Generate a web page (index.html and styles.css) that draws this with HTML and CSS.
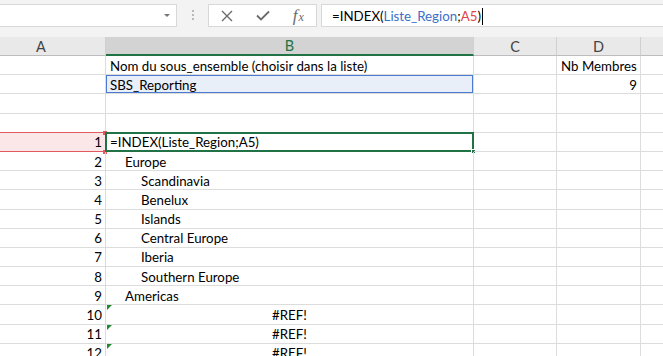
FILE: index.html
```html
<!DOCTYPE html>
<html>
<head>
<meta charset="utf-8">
<link rel="stylesheet" href="styles.css">
</head>
<body>
<div class="toolbar">
  <div class="namebox"><span class="dd"></span></div>
  <div class="grip"><i></i><i></i><i></i></div>
  <div class="fxbtns">
    <span class="slot"><svg width="12" height="12" viewBox="0 0 12 12"><path d="M1 1L11 11M11 1L1 11" stroke="#6b6b6b" stroke-width="1.4" fill="none"/></svg></span>
    <span class="slot"><svg width="14" height="11" viewBox="0 0 14 11"><path d="M1 5.5L5 9.5L13 1.5" stroke="#6b6b6b" stroke-width="1.8" fill="none"/></svg></span>
    <span class="slot fx"><span class="f">f</span><span class="x">x</span></span>
  </div>
  <div class="formula">=INDEX(<span class="rb">Liste_Region</span>;<span class="rr">A5</span>)<span class="caret"></span></div>
</div>
<div class="sheet">
  <div class="hd">A</div><div class="hd sel">B</div><div class="hd">C</div><div class="hd">D</div><div class="hd"></div>

  <div class="c"></div><div class="c">Nom du sous_ensemble (choisir dans la liste)</div><div class="c"></div><div class="c">Nb Membres</div><div class="c"></div>
  <div class="c"></div><div class="c boxed">SBS_Reporting</div><div class="c"></div><div class="c r">9</div><div class="c"></div>
  <div class="c"></div><div class="c"></div><div class="c"></div><div class="c"></div><div class="c"></div>
  <div class="c"></div><div class="c"></div><div class="c"></div><div class="c"></div><div class="c"></div>
  <div class="c r refcell">1</div><div class="c active">=INDEX(Liste_Region;A5)</div><div class="c"></div><div class="c"></div><div class="c"></div>
  <div class="c r">2</div><div class="c i1">Europe</div><div class="c"></div><div class="c"></div><div class="c"></div>
  <div class="c r">3</div><div class="c i2">Scandinavia</div><div class="c"></div><div class="c"></div><div class="c"></div>
  <div class="c r">4</div><div class="c i2">Benelux</div><div class="c"></div><div class="c"></div><div class="c"></div>
  <div class="c r">5</div><div class="c i2">Islands</div><div class="c"></div><div class="c"></div><div class="c"></div>
  <div class="c r">6</div><div class="c i2">Central Europe</div><div class="c"></div><div class="c"></div><div class="c"></div>
  <div class="c r">7</div><div class="c i2">Iberia</div><div class="c"></div><div class="c"></div><div class="c"></div>
  <div class="c r">8</div><div class="c i2">Southern Europe</div><div class="c"></div><div class="c"></div><div class="c"></div>
  <div class="c r">9</div><div class="c i1">Americas</div><div class="c"></div><div class="c"></div><div class="c"></div>
  <div class="c r">10</div><div class="c ctr err">#REF!</div><div class="c"></div><div class="c"></div><div class="c"></div>
  <div class="c r">11</div><div class="c ctr err">#REF!</div><div class="c"></div><div class="c"></div><div class="c"></div>
  <div class="c r">12</div><div class="c ctr err">#REF!</div><div class="c"></div><div class="c"></div><div class="c"></div>
</div>
</body>
</html>
```

FILE: styles.css
```css
html, body {
  margin: 0;
  padding: 0;
}
body {
  width: 663px;
  height: 356px;
  overflow: hidden;
  background: #fff;
  font-family: Lato, "Liberation Sans", sans-serif;
  font-size: 13.3px;
  color: #000;
}

.toolbar {
  height: 37px;
  box-sizing: border-box;
  padding-top: 4px;
  background: #f3f3f3;
  display: flex;
  align-items: flex-start;
}
.namebox {
  width: 177px;
  height: 23px;
  box-sizing: border-box;
  background: #fff;
  border: 1px solid #d8d8d8;
  border-left: none;
  display: flex;
  align-items: center;
  justify-content: flex-end;
  padding-right: 6px;
}
.dd {
  width: 0;
  height: 0;
  border-left: 3px solid transparent;
  border-right: 3px solid transparent;
  border-top: 3px solid #767676;
}
.grip {
  width: 31px;
  display: flex;
  flex-direction: column;
  align-items: center;
  gap: 2px;
  padding-top: 6px;
}
.grip i {
  display: block;
  width: 2px;
  height: 2px;
  background: #b9b9b9;
}
.fxbtns {
  width: 109px;
  height: 23px;
  box-sizing: border-box;
  background: #fff;
  border: 1px solid #d8d8d8;
  display: flex;
  align-items: center;
}
.slot {
  width: 36px;
  display: flex;
  justify-content: center;
  align-items: center;
}
.fx {
  font-family: "Liberation Serif", serif;
  font-style: italic;
  color: #6b6b6b;
  align-items: baseline;
}
.fx .f { font-size: 17px; }
.fx .x { font-size: 12px; margin-left: 1px; }
.formula {
  flex: 1;
  height: 23px;
  box-sizing: border-box;
  margin-left: 4px;
  background: #fff;
  border: 1px solid #d8d8d8;
  border-right: none;
  padding-left: 10px;
  padding-top: 1px;
  display: flex;
  align-items: center;
  white-space: pre;
}
.rb { color: #3b6fc6; }
.rr { color: #e0434a; }
.caret {
  display: inline-block;
  width: 1px;
  height: 17px;
  background: #000;
  margin-left: 1px;
}

.sheet {
  display: grid;
  grid-template-columns: 129px 368px 83px 84px 60px;
  grid-template-rows: 19px;
  grid-auto-rows: 19.2px;
  margin-left: -23px;
  width: 724px;
}
.hd {
  box-sizing: border-box;
  background: #e9e9e9;
  color: #444;
  border-right: 1px solid #d0d0d0;
  border-bottom: 1px solid #bdbdbd;
  display: flex;
  align-items: center;
  justify-content: center;
  font-size: 14.5px;
}
.hd.sel {
  background: #d3d3d3;
  color: #217346;
  border-bottom: 2px solid #217346;
}
.c {
  box-sizing: border-box;
  border-right: 1px solid #dcdcdc;
  border-bottom: 1px solid #dcdcdc;
  padding: 1px 4px 0;
  display: flex;
  align-items: center;
  white-space: nowrap;
  overflow: visible;
  position: relative;
}
.c.r { justify-content: flex-end; padding-right: 3px; }
.c.ctr { justify-content: center; }
.c.i1 { padding-left: 19px; }
.c.i2 { padding-left: 35px; }
.boxed {
  background: #e9eff9;
  box-shadow: inset 0 0 0 1px #4a7bd0;
}
.refcell {
  background: #fbe7e7;
  border-top: 1px solid #e05a5e;
  border-bottom: 1px solid #e05a5e;
  margin-top: -1px;
}
.refcell::before, .refcell::after {
  content: "";
  position: absolute;
  right: -2px;
  width: 4px;
  height: 4px;
  background: #e05a5e;
}
.refcell::before { top: -2px; }
.refcell::after { bottom: -3px; }
.active::before {
  content: "";
  position: absolute;
  left: -1px;
  top: -1px;
  right: -1px;
  bottom: -1px;
  border: 2px solid #217346;
}
.active::after {
  content: "";
  position: absolute;
  right: -3px;
  bottom: -3px;
  width: 5px;
  height: 5px;
  background: #217346;
  border: 1px solid #fff;
  box-sizing: border-box;
}
.err::before {
  content: "";
  position: absolute;
  left: 1px;
  top: 0;
  width: 0;
  height: 0;
  border-top: 5px solid #1e8a2e;
  border-right: 5px solid transparent;
}
```
